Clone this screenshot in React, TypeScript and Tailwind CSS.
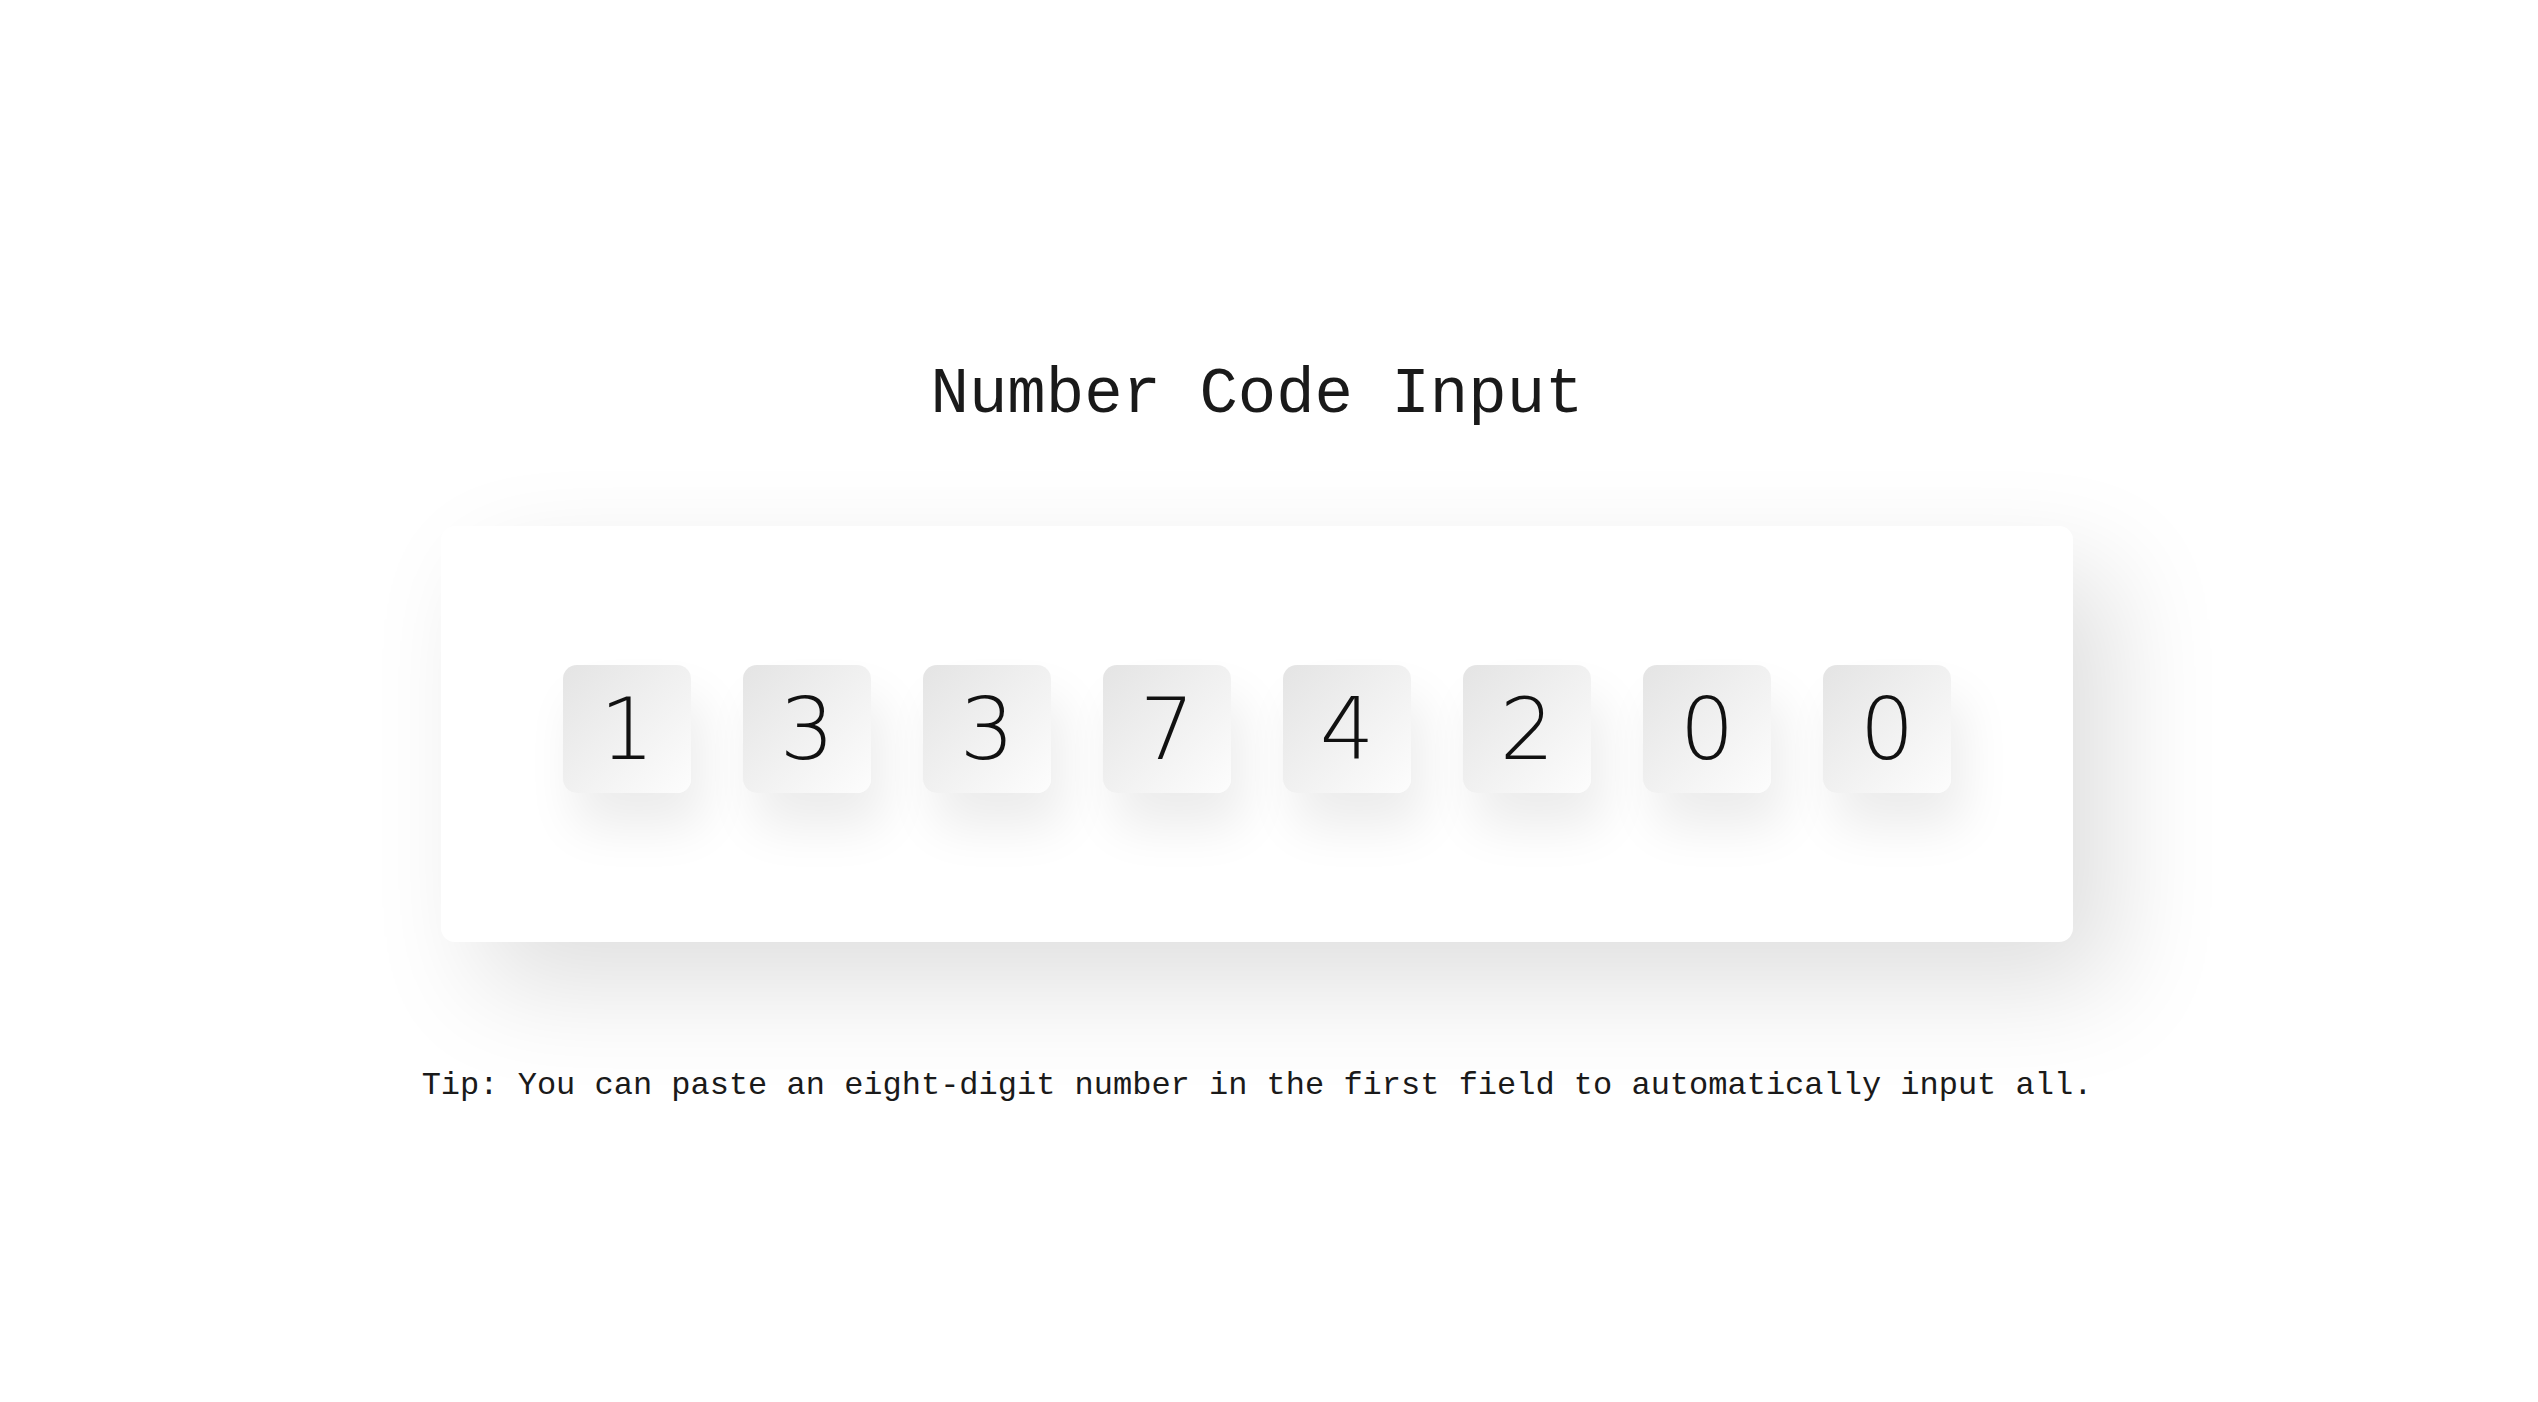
import { useRef, useState } from 'react';

const mono = "font-['Liberation_Mono','Courier_New',monospace]";

export default function App() {
  const [digits, setDigits] = useState<string[]>(['1', '3', '3', '7', '4', '2', '0', '0']);
  const refs = useRef<(HTMLInputElement | null)[]>([]);

  const handleChange = (index: number, value: string) => {
    const clean = value.replace(/\D/g, '');
    // Pasting eight digits into the first field fills all of them
    if (index === 0 && clean.length === 8) {
      setDigits(clean.split(''));
      refs.current[7]?.focus();
      return;
    }
    const next = [...digits];
    next[index] = clean.slice(-1);
    setDigits(next);
    if (clean && index < 7) refs.current[index + 1]?.focus();
  };

  return (
    <div className={`min-h-screen bg-white text-[#1a1a1a] ${mono} flex flex-col items-center pt-[363px] pr-[24px]`}>
      <h1 className="text-[64px] leading-[64px] font-normal">Number Code Input</h1>

      <div className="mt-[99px] w-[1632px] h-[416px] bg-white rounded-[14px] shadow-[40px_44px_110px_rgba(0,0,0,0.13)] flex items-center justify-center gap-[52px] pb-[10px]">
        {digits.map((d, i) => (
          <input
            key={i}
            ref={(el) => {
              refs.current[i] = el;
            }}
            value={d}
            maxLength={i === 0 ? 8 : 1}
            onChange={(e) => handleChange(i, e.target.value)}
            className="w-[128px] h-[128px] rounded-[14px] bg-gradient-to-br from-[#e4e4e4] to-[#fdfdfd] shadow-[12px_34px_50px_rgba(0,0,0,0.08)] text-center text-[86px] leading-none font-extralight text-[#111] outline-none font-['DejaVu_Sans_ExtraLight','DejaVu_Sans',sans-serif]"
          />
        ))}
      </div>

      <p className="mt-[128px] text-[32px] leading-[32px]">
        Tip: You can paste an eight-digit number in the first field to automatically input all.
      </p>
    </div>
  );
}
